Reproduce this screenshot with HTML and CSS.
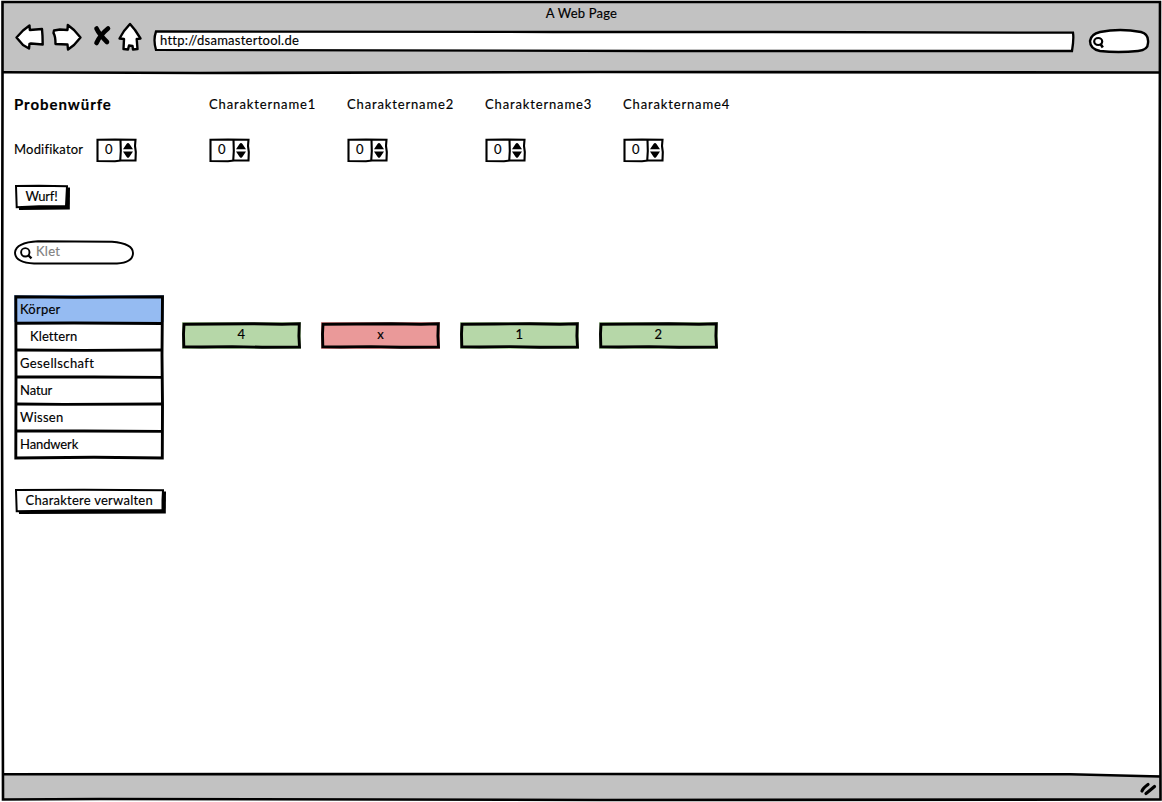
FILE: index.html
```html
<!DOCTYPE html>
<html lang="de">
<head>
<meta charset="utf-8">
<title>A Web Page</title>
<link rel="stylesheet" href="styles.css">
</head>
<body>
<svg class="defs" aria-hidden="true">
  <symbol id="stepper" viewBox="0 0 42 26"><path d="M2.500 2.700 L20 2.600 L40.500 2.700 L40 9 L40.800 15 L40.500 23.500 L26 23.500 L20 24.200 L2.500 24 Z M25.500 3 L25.800 14 L25.200 24" fill="#fff" stroke="#000" stroke-width="2.100"/><path d="M28 12.300 L31.500 7 Q33 5 34.500 7 L38 12.300 Z M28 14.500 H38 L34.500 19.800 Q33 22 31.500 19.800 Z"/></symbol>
  <symbol id="cell" viewBox="0 0 119 27"><path d="M2 2.200 L35 2 L70 1.700 L100 2.200 L117.300 1.800 L116.900 14 L117.500 25 L80 25.200 L50 24.600 L20 25 L1.800 24.800 L1.500 12 Z" fill="none" stroke="#000" stroke-width="2.900"/></symbol>
</svg>
<div class="browser">
  <header class="chrome">
    <div class="title">A Web Page</div>
    <div class="toolbar">
      <svg class="nav" viewBox="0 0 130 36" fill="#fff" stroke="#000" stroke-width="2.400" stroke-linejoin="round">
        <path d="M2.500 18.500 L9 11.500 L15.500 6.500 L15.800 11 L28 10 L28.500 17 L28.700 25.500 L17 24.500 L15.500 25 L15 29.500 L9 26 Z"/>
        <path d="M40 11.500 L46 10.500 L53.500 11 L53.800 6 L60 11 L66.500 18.500 L60 26 L54 30.500 L53.500 25.500 L41.500 25 Q41.500 17 39.500 14 Z"/>
        <path d="M82.500 9.500 Q85 15 93 23 M94 9.500 Q86 16 82.500 24" fill="none" stroke-width="4.600" stroke-linecap="round"/>
        <path d="M116 5 L121 11 L126.500 19.500 L122.700 20 L123.500 30 L119 30.500 L118.500 27 L115 26.500 L114 30.500 L109.500 30 L110 20 L105.500 19.500 L110 12 Z"/>
      </svg>
      <div class="address">
        <svg class="ink" viewBox="0 0 922 24"><path d="M3 2.500 L400 3 L620 3 L920 3.700 Q921 10 919 22 L500 22 L3 20.900 Q0 11 3 2.500 Z" fill="#fff" stroke="#000" stroke-width="2.300"/></svg>
        <span>http://dsamastertool.de</span>
      </div>
      <svg class="find" viewBox="0 0 62 26"><path d="M12 4 Q32 0 53 4 Q61 6 60 15 Q60 22 50 23 Q30 25 12 23 Q2 21 2 13 Q3 6 12 4 Z" fill="#fff" stroke="#000" stroke-width="2.400"/><ellipse cx="10.200" cy="13.500" rx="4" ry="3.500" fill="none" stroke="#000" stroke-width="2.200"/><path d="M12.500 16 L14.800 19.500" stroke="#000" stroke-width="2.600"/></svg>
    </div>
  </header>
  <main class="page">
    <div class="heads">
      <h1 class="heading">Probenwürfe</h1>
      <span class="name">Charaktername1</span>
      <span class="name">Charaktername2</span>
      <span class="name">Charaktername3</span>
      <span class="name">Charaktername4</span>
    </div>
    <div class="mods">
      <div class="modifier"><span class="label">Modifikator</span>
        <div class="stepper"><svg class="ink"><use href="#stepper"/></svg><span>0</span></div></div>
      <div class="stepper"><svg class="ink"><use href="#stepper"/></svg><span>0</span></div>
      <div class="stepper"><svg class="ink"><use href="#stepper"/></svg><span>0</span></div>
      <div class="stepper"><svg class="ink"><use href="#stepper"/></svg><span>0</span></div>
      <div class="stepper"><svg class="ink"><use href="#stepper"/></svg><span>0</span></div>
    </div>
    <div class="button roll"><svg class="ink" viewBox="0 0 56 27"><path d="M4 4 L56 3.500 L55.800 25.500 L5 26 Z"/><path d="M2 2 L25 1.700 L53 2.300 L52.500 12 L52 22 L25 22.300 L2.700 23.300 Z" fill="#fff" stroke="#000" stroke-width="2"/></svg><span>Wurf!</span></div>
    <div class="search"><svg class="ink" viewBox="0 0 121 26"><path d="M24 1.300 L98 1.800 Q119 3.500 119 13 Q119 22.500 103 23.500 L20 23.500 Q1 22.500 1 12.500 Q2 2.500 24 1.300 Z" fill="#fff" stroke="#000" stroke-width="1.900"/><circle cx="11.300" cy="12.300" r="4.200" fill="none" stroke="#000" stroke-width="1.900"/><path d="M14 15 L17.500 18.300" stroke="#000" stroke-width="2.300"/></svg><span>Klet</span></div>
    <div class="talents">
      <div class="list">
        <svg class="ink" viewBox="0 0 150 165" fill="none" stroke="#000" stroke-width="2.900"><path d="M1.800 1.800 L60 2.300 L148.500 1.800 L148 60 L148.500 110 L148.300 163 L80 162.300 L1.800 163 L2 80 Z"/><path d="M2 28.300 L60 28 L148 28.500 M2 55 L70 55.400 L148 55 M2 82 L80 82 L148 82.400 M2 109 L50 109.400 L148 109 M2 136 L70 136 L148 136.400"/></svg>
        <div class="item selected"><span>Körper</span></div>
        <div class="item child"><span>Klettern</span></div>
        <div class="item wide"><span>Gesellschaft</span></div>
        <div class="item narrow"><span>Natur</span></div>
        <div class="item"><span>Wissen</span></div>
        <div class="item narrow"><span>Handwerk</span></div>
      </div>
      <div class="results">
        <div class="result"><svg class="ink"><use href="#cell"/></svg><span>4</span></div>
        <div class="result fail"><svg class="ink"><use href="#cell"/></svg><span>x</span></div>
        <div class="result"><svg class="ink"><use href="#cell"/></svg><span>1</span></div>
        <div class="result"><svg class="ink"><use href="#cell"/></svg><span>2</span></div>
      </div>
    </div>
    <div class="button manage"><svg class="ink" viewBox="0 0 152 27"><path d="M4 4 L152 3.500 L151.800 25.500 L5 26 Z"/><path d="M2 2 L70 1.700 L149 2.300 L148.500 12 L148.500 22 L70 22.300 L2.700 23.300 Z" fill="#fff" stroke="#000" stroke-width="2"/></svg><span>Charaktere verwalten</span></div>
  </main>
  <footer class="status"><svg class="grip" viewBox="0 0 20 16"><path d="M4 11 Q5 8 10 4.500 M8 13.500 Q10 12 16.500 6.500" fill="none" stroke="#000" stroke-width="3.200" stroke-linecap="round"/></svg></footer>
  <svg class="outline" viewBox="0 0 1162 802" fill="none" stroke="#000" stroke-width="2.600"><path d="M2.500 2 L1160 2 L1159.500 300 L1160.500 799.500 L600 800 L100 799 L3 799.500 L2 400 L2.500 100 Z"/><path d="M3 72.300 L200 73 L600 72 L1160 72.500 M3 774.300 L600 774 L1070 774.300 L1160 776.500"/></svg>
</div>
</body>
</html>
```
FILE: styles.css
```css
* { box-sizing: border-box; }
body { margin: 0; background: #fff; color: #000; font: 13px/18px Lato, "Open Sans", sans-serif; letter-spacing: 0.25px; -webkit-text-stroke: 0.15px currentColor; }
.defs { display: none; }
.browser { position: relative; display: grid; grid-template-rows: 73px 1fr 27px; width: 1162px; height: 802px; overflow: hidden; }
.outline { position: absolute; inset: 0; width: 1162px; height: 802px; pointer-events: none; }
.chrome, .status { background: #c2c2c2; }
.chrome { margin: 1px 1px 0 2px; }
.status { display: flex; justify-content: flex-end; align-items: center; margin: 0 1px 2px 2px; padding-right: 3px; }
.grip { width: 20px; height: 16px; }
.title { height: 27px; padding-top: 3px; text-align: center; letter-spacing: 0.2px; }
.toolbar { display: flex; align-items: center; padding-left: 12px; height: 26px; }
.nav { width: 130px; height: 36px; margin-top: -8px; }
.address { position: relative; width: 922px; height: 24px; margin-left: 9px; padding: 2px 0 0 7px; }
.address span, .button span, .search span, .stepper span, .result span, .list span { position: relative; }
.find { width: 62px; height: 26px; margin-left: 13px; }
.ink { position: absolute; inset: 0; width: 100%; height: 100%; }
.page { padding: 22px 0 0 14px; }
.heads, .mods { display: grid; grid-template-columns: 195px repeat(4, 138px); }
.heads { height: 19px; }
.heading { margin: 0; font-size: 15px; line-height: 18px; font-weight: 700; letter-spacing: 0.95px; }
.name { letter-spacing: 0.85px; }
.mods { height: 26px; margin-top: 23px; }
.modifier { display: flex; }
.label { width: 82px; padding-top: 3px; letter-spacing: 0.2px; }
.stepper { position: relative; width: 42px; height: 26px; margin-left: -1px; padding: 3px 0 0 10px; }
.button { position: relative; height: 27px; margin-top: 20.500px; padding: 3.500px 0 0 11.500px; }
.roll { width: 56px; letter-spacing: -0.2px; }
.search { position: relative; width: 121px; height: 26px; margin-top: 29.500px; padding: 2px 0 0 22px; color: #808080; }
.talents { display: flex; gap: 18px; margin-top: 29px; }
.list { position: relative; width: 150px; height: 165px; }
.item { height: 27px; padding: 5px 0 0 6px; }
.wide { letter-spacing: 0.4px; }
.narrow { letter-spacing: -0.1px; }
.child { padding-left: 16px; letter-spacing: 0.1px; }
.selected { background: #95bbf2; }
.results { display: flex; gap: 20px; padding-top: 27px; }
.result { position: relative; width: 119px; height: 27px; padding-top: 3px; background: #b6d7a8; text-align: center; }
.fail { background: #ea9999; }
.manage { width: 152px; margin-top: 27.500px; }
```
